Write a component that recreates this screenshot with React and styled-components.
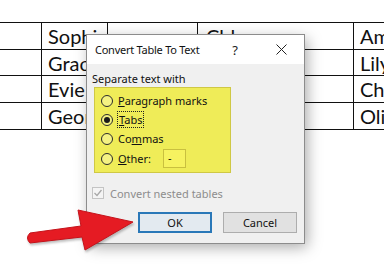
import React from 'react'
import styled, { createGlobalStyle } from 'styled-components'

const GlobalStyle = createGlobalStyle`
  html, body {
    margin: 0;
    padding: 0;
    background: #fff;
  }
  body {
    width: 384px;
    height: 267px;
    overflow: hidden;
  }
`

const Page = styled.div`
  position: relative;
  width: 384px;
  height: 267px;
  overflow: hidden;
  padding-top: 22px;
  box-sizing: border-box;
`

const Grid = styled.div`
  display: grid;
  grid-template-columns: 62px 66px 90px 156px 60px;
  grid-template-rows: 27px 26px 27px 27px;
  margin-left: -20px;
  border-top: 1px solid #111;
  width: max-content;
`

const Cell = styled.div`
  border-right: 1px solid #111;
  border-bottom: 1px solid #111;
  padding-left: ${p => p.$pad || 5}px;
  font-family: Lato, "Liberation Sans", sans-serif;
  font-size: 20px;
  line-height: 26px;
  color: #111;
  white-space: nowrap;
  overflow: hidden;
`

const Dialog = styled.div`
  position: absolute;
  left: 87px;
  top: 35px;
  width: 217px;
  height: 208px;
  background: #f0f0f0;
  box-shadow: 0 0 0 1px #8c8c8c, 3px 4px 14px rgba(0, 0, 0, 0.35);
  font-family: "Noto Sans", "Open Sans", sans-serif;
  font-size: 11px;
  color: #111;
  display: flex;
  flex-direction: column;
`

const TitleBar = styled.div`
  height: 29px;
  background: #fff;
  display: flex;
  align-items: center;
  padding-left: 8px;
`

const Title = styled.div`
  flex: 1;
  font-size: 11px;
  letter-spacing: -0.25px;
  white-space: nowrap;
`

const TitleButton = styled.div`
  width: 46px;
  flex: none;
  height: 29px;
  display: flex;
  align-items: center;
  justify-content: center;
  font-size: 13px;
  color: #222;
`

const GroupLabel = styled.div`
  margin: 7px 0 0 5px;
  height: 16px;
  line-height: 16px;
`

const Group = styled.div`
  margin-left: 7px;
  width: 137px;
  height: 86px;
  box-sizing: border-box;
  background: #efec58;
  border: 1px solid #cfc845;
  padding: 3px 0 3px 6px;
  display: flex;
  flex-direction: column;
`

const Option = styled.div`
  height: ${p => (p.$tall ? 21 : 19)}px;
  display: flex;
  align-items: center;
  gap: 5px;
`

const Radio = styled.span`
  width: 12px;
  height: 12px;
  box-sizing: border-box;
  border-radius: 50%;
  border: 1px solid #2b2b2b;
  background: rgba(255, 255, 210, 0.35);
  display: flex;
  align-items: center;
  justify-content: center;
  &::after {
    content: '';
    width: 6px;
    height: 6px;
    border-radius: 50%;
    background: ${p => (p.$on ? '#1a1a1a' : 'transparent')};
  }
`

const Focus = styled.span`
  outline: 1px dotted #222;
  outline-offset: 0;
  padding: 0 1px;
`

const OtherLabel = styled.span`
  width: 40px;
`

const OtherBox = styled.div`
  width: 23px;
  height: 19px;
  box-sizing: border-box;
  border: 1px solid #c9c03f;
  background: #f6f260;
  padding-left: 4px;
  line-height: 16px;
`

const CheckRow = styled.div`
  margin: 12px 0 0 5px;
  height: 16px;
  display: flex;
  align-items: center;
  gap: 6px;
  color: #8d8d8d;
`

const CheckBox = styled.span`
  width: 12px;
  height: 12px;
  box-sizing: border-box;
  border: 1px solid #c4c4c4;
  background: #f4f4f4;
  display: flex;
  align-items: center;
  justify-content: center;
`

const Buttons = styled.div`
  margin-top: 11px;
  padding-right: 7px;
  display: flex;
  justify-content: flex-end;
  gap: 11px;
`

const Button = styled.div`
  width: 74px;
  height: 21px;
  box-sizing: border-box;
  display: flex;
  align-items: center;
  justify-content: center;
  background: ${p => (p.$primary ? '#e3eaf0' : '#e1e1e1')};
  border: ${p => (p.$primary ? '2px solid #2a78b8' : '1px solid #adadad')};
  font-size: 11px;
  color: #111;
`

const Arrow = styled.svg`
  position: absolute;
  left: 0;
  top: 0;
  filter: drop-shadow(1px 2px 1px rgba(0, 0, 0, 0.25));
`

const rows = [
  ['', 'Sophie', '', 'Chloe', 'Amelia'],
  ['', 'Grace', '', 'Isla', 'Lily'],
  ['', 'Evie', '', 'Emily', 'Charlotte'],
  ['', 'George', '', 'Ava', 'Olivia'],
]

export default function App() {
  return (
    <Page>
      <GlobalStyle />
      <Grid>
        {rows.map((r, i) =>
          r.map((t, j) => (
            <Cell key={i + '-' + j} $pad={j === 3 ? 8 : 6}>{t}</Cell>
          ))
        )}
      </Grid>

      <Dialog>
        <TitleBar>
          <Title>Convert Table To Text</Title>
          <TitleButton>?</TitleButton>
          <TitleButton>
            <svg width="11" height="11" viewBox="0 0 11 11">
              <path d="M0.5 0.5 L10.5 10.5 M10.5 0.5 L0.5 10.5" stroke="#222" strokeWidth="1" />
            </svg>
          </TitleButton>
        </TitleBar>
        <GroupLabel>Separate text with</GroupLabel>
        <Group>
          <Option>
            <Radio />
            <span><u>P</u>aragraph marks</span>
          </Option>
          <Option>
            <Radio $on />
            <Focus><u>T</u>abs</Focus>
          </Option>
          <Option>
            <Radio />
            <span>Co<u>m</u>mas</span>
          </Option>
          <Option $tall>
            <Radio />
            <OtherLabel><u>O</u>ther:</OtherLabel>
            <OtherBox>-</OtherBox>
          </Option>
        </Group>
        <CheckRow>
          <CheckBox>
            <svg width="10" height="10" viewBox="0 0 10 10">
              <path d="M1.5 5 L4 7.5 L8.5 2" fill="none" stroke="#a8a8a8" strokeWidth="1.3" />
            </svg>
          </CheckBox>
          <span>Convert nested tables</span>
        </CheckRow>
        <Buttons>
          <Button $primary>OK</Button>
          <Button>Cancel</Button>
        </Buttons>
      </Dialog>

      <Arrow width="384" height="267" viewBox="0 0 384 267">
        <path
          d="M30 233 L81 226 L78 210 L133 222 L85 250 L82 237 L30 243 Q25 238 30 233 Z"
          fill="#e51b23"
          stroke="#c4121a"
          strokeWidth="1"
          strokeLinejoin="round"
        />
      </Arrow>
    </Page>
  )
}
